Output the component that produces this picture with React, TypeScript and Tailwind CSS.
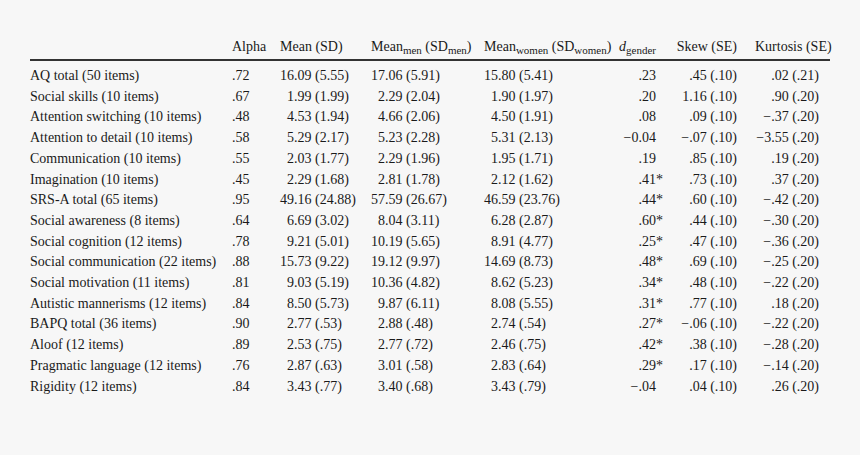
import React from 'react';

type Row = {
  label: string;
  alpha: string;
  mean: string;
  men: string;
  women: string;
  d: string;
  skew: string;
  kurt: string;
};

const rows: Row[] = [
  { label: 'AQ total (50 items)', alpha: '.72', mean: '16.09 (5.55)', men: '17.06 (5.91)', women: '15.80 (5.41)', d: '.23', skew: '.45 (.10)', kurt: '.02 (.21)' },
  { label: 'Social skills (10 items)', alpha: '.67', mean: '1.99 (1.99)', men: '2.29 (2.04)', women: '1.90 (1.97)', d: '.20', skew: '1.16 (.10)', kurt: '.90 (.20)' },
  { label: 'Attention switching (10 items)', alpha: '.48', mean: '4.53 (1.94)', men: '4.66 (2.06)', women: '4.50 (1.91)', d: '.08', skew: '.09 (.10)', kurt: '\u2212.37 (.20)' },
  { label: 'Attention to detail (10 items)', alpha: '.58', mean: '5.29 (2.17)', men: '5.23 (2.28)', women: '5.31 (2.13)', d: '\u22120.04', skew: '\u2212.07 (.10)', kurt: '\u22123.55 (.20)' },
  { label: 'Communication (10 items)', alpha: '.55', mean: '2.03 (1.77)', men: '2.29 (1.96)', women: '1.95 (1.71)', d: '.19', skew: '.85 (.10)', kurt: '.19 (.20)' },
  { label: 'Imagination (10 items)', alpha: '.45', mean: '2.29 (1.68)', men: '2.81 (1.78)', women: '2.12 (1.62)', d: '.41*', skew: '.73 (.10)', kurt: '.37 (.20)' },
  { label: 'SRS-A total (65 items)', alpha: '.95', mean: '49.16 (24.88)', men: '57.59 (26.67)', women: '46.59 (23.76)', d: '.44*', skew: '.60 (.10)', kurt: '\u2212.42 (.20)' },
  { label: 'Social awareness (8 items)', alpha: '.64', mean: '6.69 (3.02)', men: '8.04 (3.11)', women: '6.28 (2.87)', d: '.60*', skew: '.44 (.10)', kurt: '\u2212.30 (.20)' },
  { label: 'Social cognition (12 items)', alpha: '.78', mean: '9.21 (5.01)', men: '10.19 (5.65)', women: '8.91 (4.77)', d: '.25*', skew: '.47 (.10)', kurt: '\u2212.36 (.20)' },
  { label: 'Social communication (22 items)', alpha: '.88', mean: '15.73 (9.22)', men: '19.12 (9.97)', women: '14.69 (8.73)', d: '.48*', skew: '.69 (.10)', kurt: '\u2212.25 (.20)' },
  { label: 'Social motivation (11 items)', alpha: '.81', mean: '9.03 (5.19)', men: '10.36 (4.82)', women: '8.62 (5.23)', d: '.34*', skew: '.48 (.10)', kurt: '\u2212.22 (.20)' },
  { label: 'Autistic mannerisms (12 items)', alpha: '.84', mean: '8.50 (5.73)', men: '9.87 (6.11)', women: '8.08 (5.55)', d: '.31*', skew: '.77 (.10)', kurt: '.18 (.20)' },
  { label: 'BAPQ total (36 items)', alpha: '.90', mean: '2.77 (.53)', men: '2.88 (.48)', women: '2.74 (.54)', d: '.27*', skew: '\u2212.06 (.10)', kurt: '\u2212.22 (.20)' },
  { label: 'Aloof (12 items)', alpha: '.89', mean: '2.53 (.75)', men: '2.77 (.72)', women: '2.46 (.75)', d: '.42*', skew: '.38 (.10)', kurt: '\u2212.28 (.20)' },
  { label: 'Pragmatic language (12 items)', alpha: '.76', mean: '2.87 (.63)', men: '3.01 (.58)', women: '2.83 (.64)', d: '.29*', skew: '.17 (.10)', kurt: '\u2212.14 (.20)' },
  { label: 'Rigidity (12 items)', alpha: '.84', mean: '3.43 (.77)', men: '3.40 (.68)', women: '3.43 (.79)', d: '\u2212.04', skew: '.04 (.10)', kurt: '.26 (.20)' },
];

const grid = 'grid grid-cols-[202px_48px_91px_113px_116px_63px_74px_93px]';

// lines the first number up on its decimal point
const Aligned: React.FC<{ value: string }> = ({ value }) => {
  const dot = value.indexOf('.');
  return (
    <span className="whitespace-nowrap">
      <span className="inline-block w-[14px] text-right">{value.slice(0, dot)}</span>
      {value.slice(dot)}
    </span>
  );
};

const DCell: React.FC<{ value: string }> = ({ value }) => {
  const star = value.endsWith('*');
  return (
    <div className="text-right whitespace-nowrap">
      {star ? value.slice(0, -1) : value}
      <span className={star ? '' : 'invisible'}>*</span>
    </div>
  );
};

const Sub: React.FC<{ children: React.ReactNode }> = ({ children }) => (
  <sub className="text-[11px]">{children}</sub>
);

export default function App() {
  return (
    <div
      className="w-[860px] h-[455px] bg-[#f7f7f7] text-[#1a1a1a] text-[14px] leading-[20.7px] pt-[37px] pl-[30px]"
      style={{ fontFamily: '"Liberation Serif", "Times New Roman", serif' }}
    >
      <div className="w-[800px]">
        <div className={`${grid} h-[24px] border-b-2 border-[#333]`}>
          <div />
          <div>Alpha</div>
          <div>Mean (SD)</div>
          <div className="whitespace-nowrap">
            Mean<Sub>men</Sub> (SD<Sub>men</Sub>)
          </div>
          <div className="whitespace-nowrap">
            Mean<Sub>women</Sub> (SD<Sub>women</Sub>)
          </div>
          <div className="text-right whitespace-nowrap">
            <i>d</i>
            <Sub>gender</Sub>
            <span className="invisible">*</span>
          </div>
          <div className="text-right whitespace-nowrap">Skew (SE)</div>
          <div className="pl-[18px] whitespace-nowrap">Kurtosis (SE)</div>
        </div>
        <div className="pt-[5px]">
          {rows.map((r) => (
            <div key={r.label} className={grid}>
              <div className="whitespace-nowrap">{r.label}</div>
              <div>{r.alpha}</div>
              <div>
                <Aligned value={r.mean} />
              </div>
              <div>
                <Aligned value={r.men} />
              </div>
              <div>
                <Aligned value={r.women} />
              </div>
              <DCell value={r.d} />
              <div className="text-right whitespace-nowrap">{r.skew}</div>
              <div className="text-right pr-[11px] whitespace-nowrap">{r.kurt}</div>
            </div>
          ))}
        </div>
      </div>
    </div>
  );
}
